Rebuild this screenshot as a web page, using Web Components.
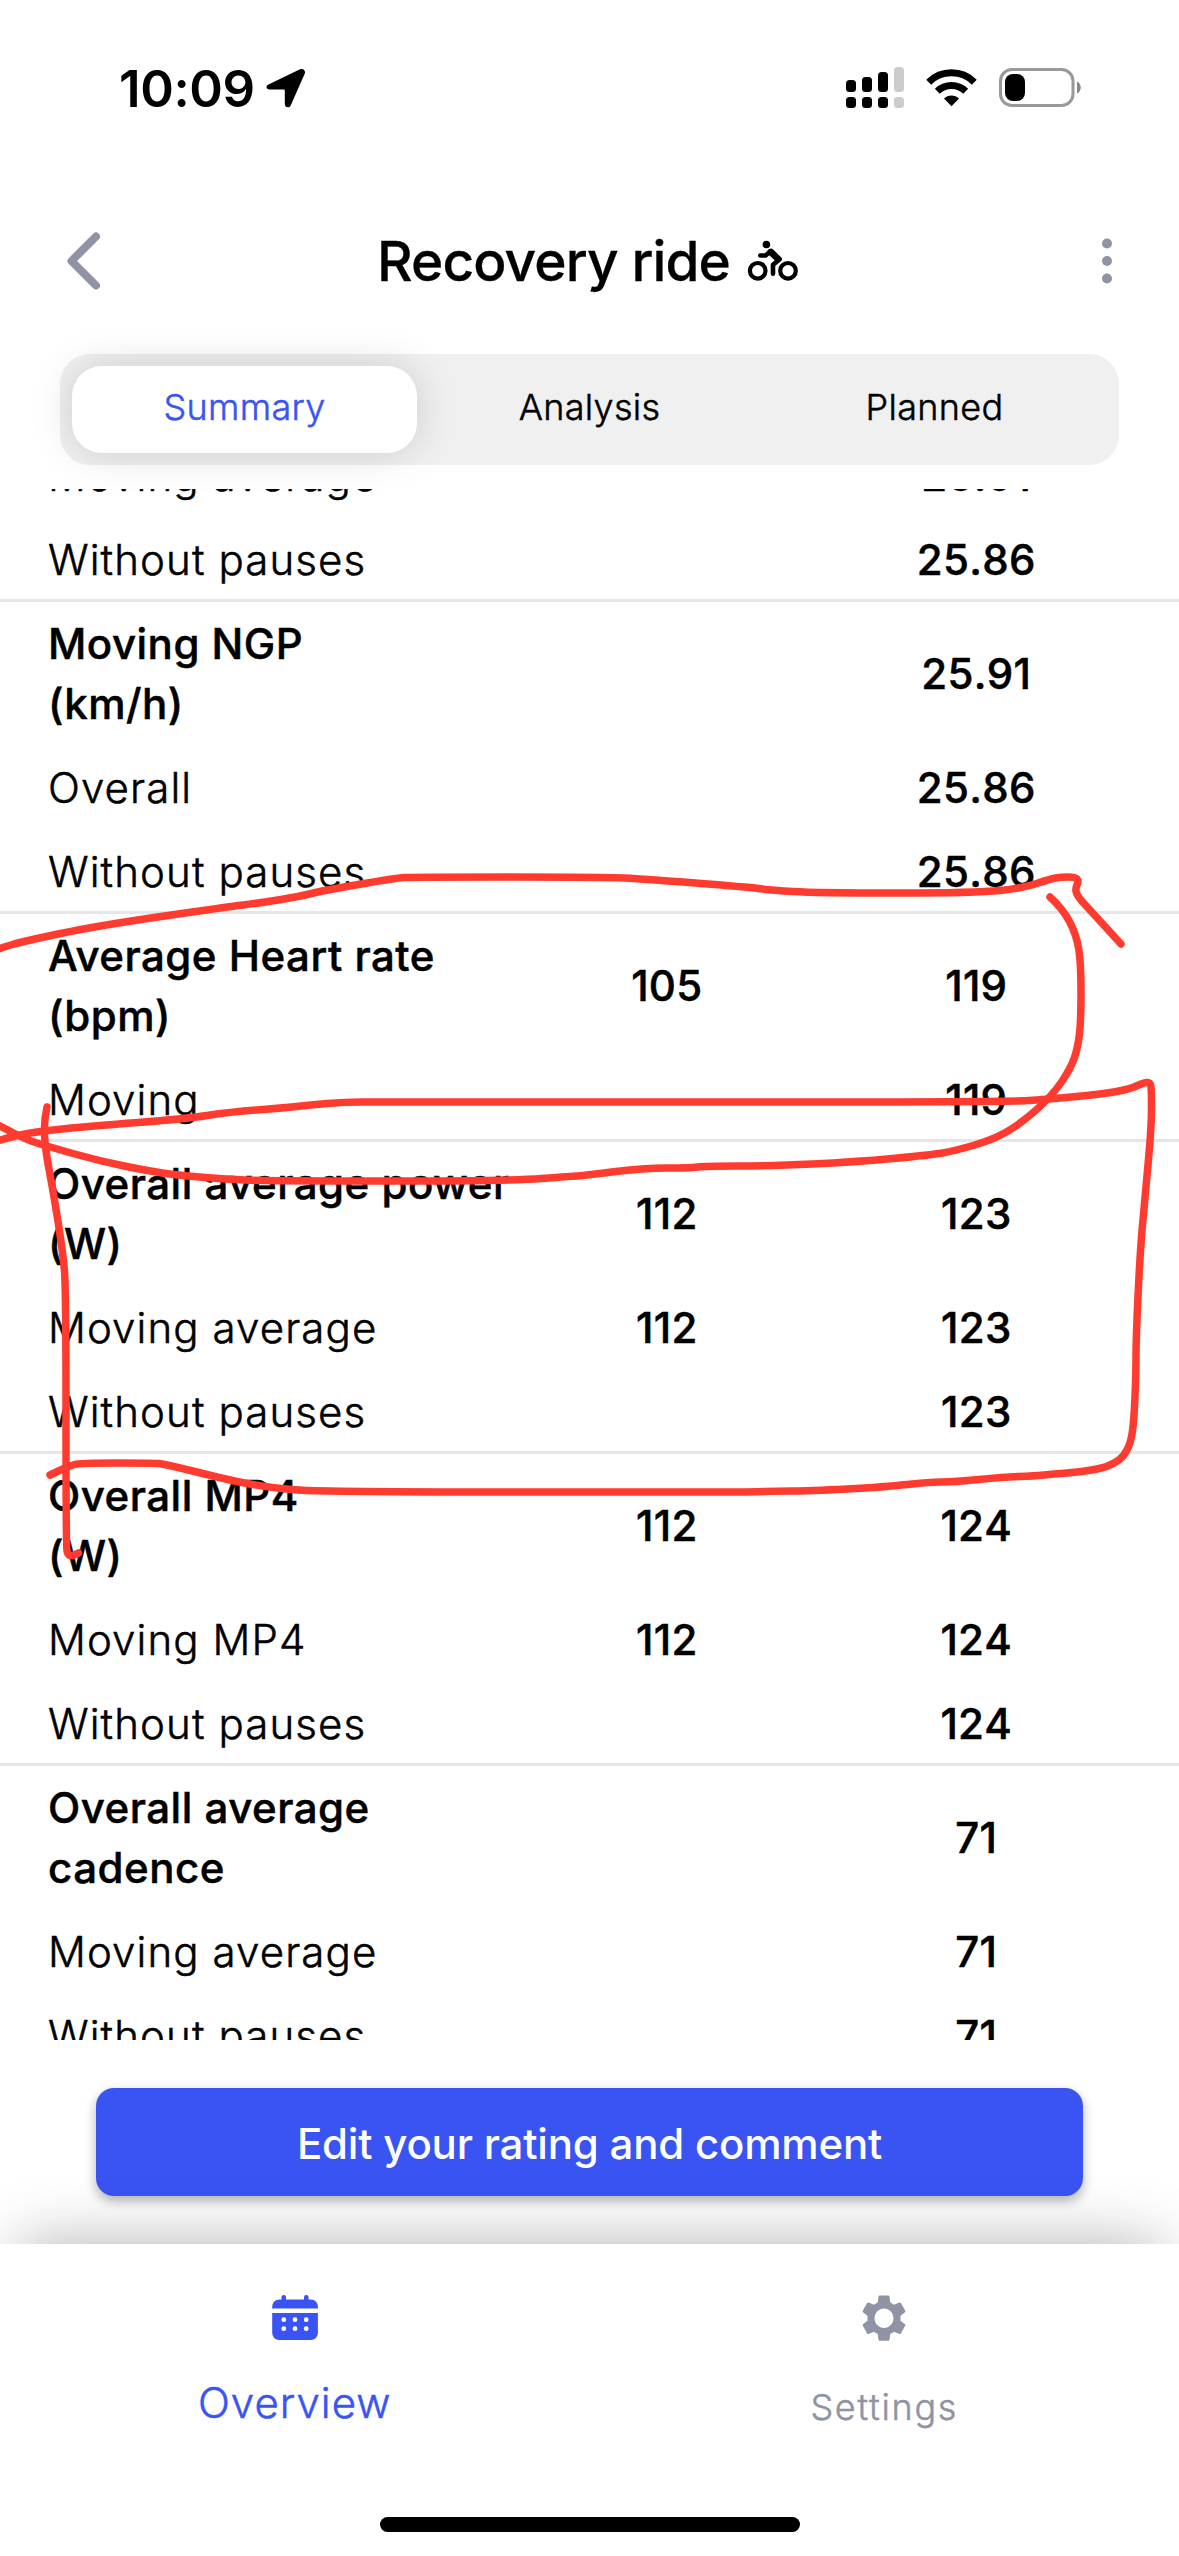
<!DOCTYPE html>
<html lang="en">
<head>
<meta charset="utf-8">
<title>Recovery ride</title>
<style>
    html, body {
        margin: 0;
        background: #fff;
    }
    body {
        font-family: Inter, "Liberation Sans", sans-serif;
        color: #000;
    }
</style>
</head>
<body>
<ride-app></ride-app>
<script>
class StatusBar extends HTMLElement {
    constructor() {
        super();
        this.attachShadow({ mode: 'open' });
    }
    connectedCallback() {
        this.shadowRoot.innerHTML = `
            <style>
                :host {
                    display: flex;
                    justify-content: space-between;
                    align-items: center;
                    height: 176px;
                    padding: 0 98px 0 119px;
                    box-sizing: border-box;
                }
                .left, .right {
                    display: flex;
                    align-items: center;
                }
                .left {
                    gap: 11px;
                }
                .time {
                    font-size: 51px;
                    font-weight: 600;
                    letter-spacing: -.4px;
                }
                svg {
                    display: block;
                }
            </style>
            <div class="left">
                <span class="time"><slot></slot></span>
                <svg width="40" height="40" viewBox="0 0 40 40"><path d="M2.5 16.5 34 1.3c3-1.5 6 1.3 4.7 4.4L24.8 37.3c-1.5 3.3-6 2.300-6-1.300V22.600c0-.6-.4-1-1-1H3.800c-3.700 0-4.500-3.600-1.300-5.100z"/></svg>
            </div>
            <div class="right">
                <svg width="58" height="42" viewBox="0 0 58 42" style="margin-right:22px">
                    <g>
                        <rect x="0" y="13" width="10" height="12" rx="3.500"/>
                        <rect x="16" y="10" width="10" height="15" rx="3.500"/>
                        <rect x="32" y="5" width="10" height="20" rx="3.500"/>
                        <rect x="0" y="30" width="10" height="11" rx="3.500"/>
                        <rect x="16" y="30" width="10" height="11" rx="3.500"/>
                        <rect x="32" y="30" width="10" height="11" rx="3.500"/>
                    </g>
                    <g fill="#ccc">
                        <rect x="48" y="0" width="10" height="25" rx="3.500"/>
                        <rect x="48" y="30" width="10" height="11" rx="3.500"/>
                    </g>
                </svg>
                <svg width="51" height="38" viewBox="0 0 51 38" style="margin-right:22px">
                    <path d="M25.500 37.300 18 29.600c4-4.200 11-4.200 15 0z"/>
                    <path d="M11.300 22.300a20.500 20.500 0 0 1 28.400 0" fill="none" stroke="#000" stroke-width="7"/>
                    <path d="M2.700 13.200a32.500 32.500 0 0 1 45.600 0" fill="none" stroke="#000" stroke-width="7"/>
                </svg>
                <svg width="82" height="40" viewBox="0 0 82 40">
                    <rect x="1.500" y="1.500" width="72.500" height="36" rx="11.500" fill="none" stroke="#999" stroke-width="3"/>
                    <rect x="6" y="6" width="20" height="27" rx="8"/>
                    <path d="M78 13.500c5 2.200 5 10 0 12.200z" fill="#888"/>
                </svg>
            </div>
        `;
    }
}
customElements.define('status-bar', StatusBar);

class PageHeader extends HTMLElement {
    constructor() {
        super();
        this.attachShadow({ mode: 'open' });
    }
    connectedCallback() {
        this.shadowRoot.innerHTML = `
            <style>
                :host {
                    display: grid;
                    grid-template-columns: 40px 1fr 44px;
                    align-items: center;
                    height: 170px;
                    padding: 0 63px 0 64px;
                }
                .title {
                    display: flex;
                    align-items: center;
                    justify-content: center;
                    gap: 17px;
                    font-size: 55px;
                    font-weight: 500;
                    letter-spacing: -.9px;
                    line-height: 68px;
                    -webkit-text-stroke: .3px #000;
                }
                svg {
                    display: block;
                }
                .more {
                    justify-self: end;
                }
            </style>
            <svg width="40" height="60" viewBox="0 0 40 60"><path d="M32 5.500 7.500 30 32 54.500" fill="none" stroke="#8f93a3" stroke-width="8" stroke-linecap="round" stroke-linejoin="round"/></svg>
            <div class="title">
                <span class="text"><slot></slot></span>
                <svg width="52" height="42" viewBox="0 0 52 42">
                    <g fill="none" stroke="#000" stroke-linecap="round" stroke-linejoin="round">
                        <circle cx="10.700" cy="30.800" r="7.800" stroke-width="4.200"/>
                        <circle cx="41" cy="30.800" r="7.800" stroke-width="4.200"/>
                        <path d="M13.300 15.500h5.200l5.800-4.700 8.400 8.400-6.700 5.600v9" stroke-width="4.600"/>
                        <path d="m23.300 12 7.700 7.200" stroke-width="6"/>
                    </g>
                    <circle cx="19.400" cy="4.500" r="3.800"/>
                </svg>
            </div>
            <svg class="more" width="16" height="60" viewBox="0 0 16 60" fill="#8f93a3">
                <circle cx="7" cy="12.500" r="5"/>
                <circle cx="7" cy="30" r="5"/>
                <circle cx="7" cy="47.500" r="5"/>
            </svg>
        `;
    }
}
customElements.define('page-header', PageHeader);

class SegmentTabs extends HTMLElement {
    constructor() {
        super();
        this.attachShadow({ mode: 'open' });
    }
    connectedCallback() {
        const items = this.getAttribute('items').split(',');
        this.shadowRoot.innerHTML = `
            <style>
                :host {
                    display: grid;
                    grid-template-columns: repeat(3, 1fr);
                    height: 111px;
                    margin: 8px 60px 0;
                    padding: 12px;
                    box-sizing: border-box;
                    background: #f0f0f0;
                    border-radius: 30px;
                }
                div {
                    display: flex;
                    align-items: center;
                    justify-content: center;
                    padding-bottom: 5px;
                    border-radius: 30px;
                    font-size: 36px;
                    font-weight: 300;
                    letter-spacing: .3px;
                    -webkit-text-stroke: .5px currentColor;
                }
                .active {
                    color: #3a53f3;
                    background: #fff;
                    box-shadow: 0 0 42px rgba(0, 0, 0, .15);
                }
            </style>
            ${items.map((t, i) => `<div class="${i === 0 ? 'active' : ''}"><span>${t}</span></div>`).join('')}
        `;
    }
}
customElements.define('segment-tabs', SegmentTabs);

// One table row: label, planned value, actual value
class StatRow extends HTMLElement {
    constructor() {
        super();
        this.attachShadow({ mode: 'open' });
    }
    connectedCallback() {
        this.shadowRoot.innerHTML = `
            <style>
                :host {
                    display: grid;
                    grid-template-columns: 3fr 2fr 2fr;
                    align-items: center;
                    padding: 12px 48px;
                    font-size: 42px;
                    line-height: 60px;
                    -webkit-text-stroke: .5px #000;
                }
                .label {
                    font-weight: 300;
                    letter-spacing: 1.1px;
                }
                :host([head]) .label {
                    font-weight: 500;
                    letter-spacing: .5px;
                }
                .value {
                    font-weight: 500;
                    font-kerning: none;
                    letter-spacing: .3px;
                    text-align: center;
                }
            </style>
            <div class="label"><slot></slot></div>
            <div class="value">${this.getAttribute('planned') || ''}</div>
            <div class="value">${this.getAttribute('actual') || ''}</div>
        `;
    }
}
customElements.define('stat-row', StatRow);

class StatGroup extends HTMLElement {
    constructor() {
        super();
        this.attachShadow({ mode: 'open' });
    }
    connectedCallback() {
        this.shadowRoot.innerHTML = `
            <style>
                :host {
                    display: block;
                    border-bottom: 3px solid #e4e7ea;
                }
                ::slotted(:last-child) {
                    padding-bottom: 9px;
                }
            </style>
            <slot></slot>
        `;
    }
}
customElements.define('stat-group', StatGroup);

class StatList extends HTMLElement {
    constructor() {
        super();
        this.attachShadow({ mode: 'open' });
    }
    connectedCallback() {
        this.shadowRoot.innerHTML = `
            <style>
                :host {
                    display: block;
                    height: 1551px;
                    margin-top: 24px;
                    overflow: hidden;
                }
                .scrolled {
                    margin-top: -55px;
                }
            </style>
            <div class="scrolled"><slot></slot></div>
        `;
    }
}
customElements.define('stat-list', StatList);

class ActionButton extends HTMLElement {
    constructor() {
        super();
        this.attachShadow({ mode: 'open' });
    }
    connectedCallback() {
        this.shadowRoot.innerHTML = `
            <style>
                :host {
                    display: block;
                    padding: 48px 96px;
                }
                button {
                    display: block;
                    width: 100%;
                    height: 108px;
                    padding: 3px 0 0;
                    border: 0;
                    border-radius: 18px;
                    background: #3a53f3;
                    box-shadow: 0 5px 12px rgba(0, 0, 0, .3);
                    color: #fff;
                    font: 500 42px Inter, sans-serif;
                    letter-spacing: -.2px;
                }
            </style>
            <button><slot></slot></button>
        `;
    }
}
customElements.define('action-button', ActionButton);

class BottomNav extends HTMLElement {
    constructor() {
        super();
        this.attachShadow({ mode: 'open' });
    }
    connectedCallback() {
        this.shadowRoot.innerHTML = `
            <style>
                :host {
                    display: flex;
                    flex-direction: column;
                    align-items: center;
                    height: 312px;
                    background: #fff;
                    box-shadow: 0 -18px 60px -18px rgba(0, 0, 0, .3);
                }
                nav {
                    display: grid;
                    grid-template-columns: 1fr 1fr;
                    width: 100%;
                    height: 273px;
                }
                .item {
                    display: flex;
                    flex-direction: column;
                    align-items: center;
                    padding-top: 50px;
                    font-weight: 300;
                    font-size: 36px;
                    letter-spacing: 1.7px;
                    line-height: 60px;
                    color: #8f93a3;
                    gap: 35px;
                }
                .item span {
                    -webkit-text-stroke: .5px currentColor;
                }
                .item.active {
                    font-size: 42px;
                    letter-spacing: 1px;
                    color: #3a53f3;
                    gap: 31px;
                }
                .home {
                    width: 420px;
                    height: 15px;
                    border-radius: 8px;
                    background: #000;
                }
            </style>
            <nav>
                <div class="item active">
                    <svg width="48" height="48" viewBox="0 0 48 48" fill="currentColor">
                        <rect x="10.500" y="1" width="4.500" height="9" rx="2.200"/>
                        <rect x="33" y="1" width="4.500" height="9" rx="2.200"/>
                        <path d="M1.200 14.500V13c0-4.500 3-7.600 7.400-7.600h31c4.300 0 7.300 3.100 7.300 7.600v1.500z"/>
                        <path fill-rule="evenodd" d="M1.200 19h45.700v19.500c0 4.500-3 7.500-7.300 7.500h-31c-4.400 0-7.400-3-7.400-7.500zM12.800 23.300a2.400 2.400 0 1 0 0 4.800 2.400 2.400 0 1 0 0-4.800zm11.200 0a2.400 2.400 0 1 0 0 4.800 2.400 2.400 0 1 0 0-4.800zm11.200 0a2.400 2.400 0 1 0 0 4.800 2.400 2.400 0 1 0 0-4.800zM12.800 32.300a2.400 2.400 0 1 0 0 4.800 2.400 2.400 0 1 0 0-4.800zm11.200 0a2.400 2.400 0 1 0 0 4.800 2.400 2.400 0 1 0 0-4.800zm11.200 0a2.400 2.400 0 1 0 0 4.800 2.400 2.400 0 1 0 0-4.800z"/>
                    </svg>
                    <span>Overview</span>
                </div>
                <div class="item">
                    <svg width="54" height="48" viewBox="-.95 -.1 25.900 24" fill="currentColor">
                        <path d="M19.430 12.980c.04-.32.070-.64.070-.98s-.03-.66-.07-.98l2.110-1.650c.19-.15.240-.42.120-.64l-2-3.460c-.12-.22-.39-.3-.61-.22l-2.490 1c-.52-.4-1.080-.73-1.690-.98l-.38-2.650C14.460 2.180 14.250 2 14 2h-4c-.25 0-.46.180-.49.420l-.38 2.650c-.61.250-1.170.59-1.690.98l-2.490-1c-.23-.09-.49 0-.61.220l-2 3.460c-.13.220-.07.490.12.640l2.110 1.650c-.04.320-.07.650-.07.980s.03.660.070.980l-2.110 1.650c-.19.150-.24.420-.12.640l2 3.460c.12.220.39.300.61.220l2.490-1c.52.400 1.080.73 1.690.98l.38 2.650c.03.240.24.420.49.420h4c.25 0 .46-.18.490-.42l.38-2.650c.61-.25 1.170-.59 1.690-.98l2.490 1c.23.090.49 0 .61-.22l2-3.460c.12-.22.070-.49-.12-.64l-2.110-1.650zM12 16.300c-2.370 0-4.300-1.930-4.300-4.300s1.930-4.300 4.300-4.300 4.300 1.930 4.300 4.300-1.930 4.300-4.300 4.300z" transform="translate(12 12) scale(1.100 1.130) translate(-12 -12)"/>
                    </svg>
                    <span>Settings</span>
                </div>
            </nav>
            <div class="home"></div>
        `;
    }
}
customElements.define('bottom-nav', BottomNav);

// Freehand marker strokes drawn over the page
class MarkerLayer extends HTMLElement {
    constructor() {
        super();
        this.attachShadow({ mode: 'open' });
    }
    connectedCallback() {
        const strokes = [
            [[-6,951],[0,948],[25,941],[96,926],[226,907],[260,903],[302,896],[321,891],[396,878],[412,877],[606,877],[644,879],[747,887],[770,890],[816,893],[977,893],[1023,888],[1050,879],[1061,877],[1075,877],[1079,881],[1075,889],[1078,897],[1090,910],[1121,944]],
            [[1050,897],[1063,909],[1076.5,935],[1081,963],[1081,1020],[1078,1047],[1071,1068],[1052,1096],[1019,1125],[992,1140],[954,1151],[931,1155],[854.5,1162],[770,1166],[705,1166],[690,1168],[644,1168],[579,1176],[574,1176],[509,1181],[268,1181],[222,1179],[176,1175],[149,1171],[99.5,1161],[50,1147],[27,1140],[0,1126],[-6,1123]],
            [[-6,1142],[0,1140],[19,1135],[42,1131],[92,1126],[184,1119],[230,1112],[283,1108],[310,1105],[344,1102],[380,1102],[1008,1102],[1050,1099],[1103,1094],[1130,1089],[1143,1083],[1150,1082],[1151.5,1089],[1151.5,1127],[1145,1197],[1140,1253],[1136,1340],[1136,1373],[1134,1420],[1131,1442],[1124,1456],[1115,1463],[1103,1468],[1080,1472],[1053.5,1474],[1034,1476],[1004,1477],[954,1482],[929,1482],[885,1487],[809,1491],[774,1491],[755,1492],[700,1492],[325,1492],[272,1488],[233,1481],[164.5,1464],[153,1463],[80,1463],[69,1466],[50,1475]],
            [[47,1107],[44,1120],[45,1148],[53.5,1193],[63,1253],[66,1290],[66,1547],[68,1555],[72,1556],[78.5,1553]]
        ];
        this.shadowRoot.innerHTML = `
            <style>
                :host {
                    display: block;
                    position: absolute;
                    inset: 0;
                    overflow: hidden;
                    pointer-events: none;
                }
                path {
                    fill: none;
                    stroke: #ff3b30;
                    stroke-width: 7.500px;
                    stroke-linecap: round;
                    stroke-linejoin: round;
                }
            </style>
            <svg width="1179" height="2556">
                ${strokes.map(points => `<path d="${this.smooth(points)}"/>`).join('')}
            </svg>
        `;
    }
    // quadratic curves through the midpoints
    smooth(points) {
        let d = `M${points[0]}`;
        for (let i = 1; i < points.length - 1; i++) {
            const [x, y] = points[i];
            const [nx, ny] = points[i + 1];
            d += `Q${x} ${y} ${(x + nx) / 2} ${(y + ny) / 2}`;
        }
        return d + `L${points[points.length - 1]}`;
    }
}
customElements.define('marker-layer', MarkerLayer);

class RideApp extends HTMLElement {
    constructor() {
        super();
        this.attachShadow({ mode: 'open' });
    }
    connectedCallback() {
        this.shadowRoot.innerHTML = `
            <style>
                :host {
                    display: flex;
                    flex-direction: column;
                    position: relative;
                    width: 1179px;
                    height: 2556px;
                    overflow: hidden;
                    background: #fff;
                }
                bottom-nav {
                    position: relative;
                }
            </style>
            <status-bar>10:09</status-bar>
            <page-header>Recovery ride</page-header>
            <segment-tabs items="Summary,Analysis,Planned"></segment-tabs>
            <stat-list>
                <stat-group>
                    <stat-row actual="25.91">Moving average</stat-row>
                    <stat-row actual="25.86">Without pauses</stat-row>
                </stat-group>
                <stat-group>
                    <stat-row head actual="25.91">Moving NGP<br>(km/h)</stat-row>
                    <stat-row actual="25.86">Overall</stat-row>
                    <stat-row actual="25.86">Without pauses</stat-row>
                </stat-group>
                <stat-group>
                    <stat-row head planned="105" actual="119">Average Heart rate<br>(bpm)</stat-row>
                    <stat-row actual="119">Moving</stat-row>
                </stat-group>
                <stat-group>
                    <stat-row head planned="112" actual="123">Overall average power<br>(W)</stat-row>
                    <stat-row planned="112" actual="123">Moving average</stat-row>
                    <stat-row actual="123">Without pauses</stat-row>
                </stat-group>
                <stat-group>
                    <stat-row head planned="112" actual="124">Overall MP4<br>(W)</stat-row>
                    <stat-row planned="112" actual="124">Moving MP4</stat-row>
                    <stat-row actual="124">Without pauses</stat-row>
                </stat-group>
                <stat-group>
                    <stat-row head actual="71">Overall average<br>cadence</stat-row>
                    <stat-row actual="71">Moving average</stat-row>
                    <stat-row actual="71">Without pauses</stat-row>
                </stat-group>
            </stat-list>
            <action-button>Edit your rating and comment</action-button>
            <bottom-nav></bottom-nav>
            <marker-layer></marker-layer>
        `;
    }
}
customElements.define('ride-app', RideApp);
</script>
</body>
</html>
